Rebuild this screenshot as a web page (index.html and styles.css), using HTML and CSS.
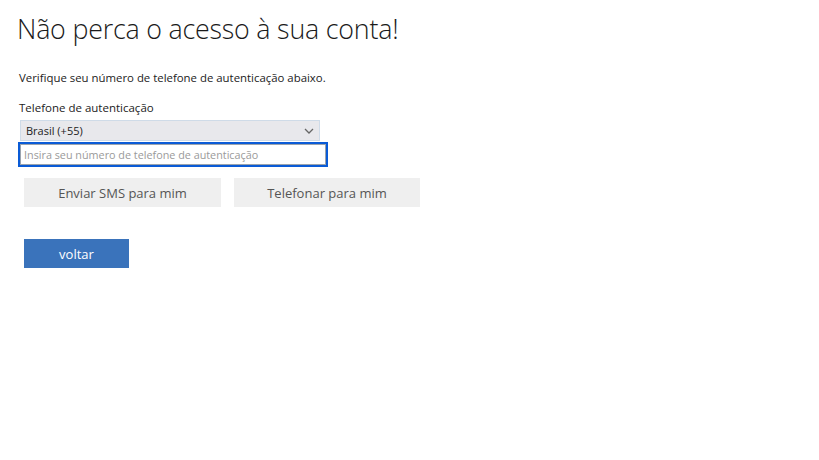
FILE: index.html
```html
<!DOCTYPE html>
<html lang="pt-BR">
<head>
<meta charset="utf-8">
<title>Não perca o acesso à sua conta!</title>
<link rel="stylesheet" href="styles.css">
</head>
<body>
<main class="page">
  <h1 class="title">Não perca o acesso à sua conta!</h1>
  <p class="intro">Verifique seu número de telefone de autenticação abaixo.</p>
  <label class="label">Telefone de autenticação</label>
  <div class="select">
    <span>Brasil (+55)</span>
    <svg class="chev" width="10" height="6" viewBox="0 0 10 6"><path d="M1 1 L5 5 L9 1" fill="none" stroke="#666" stroke-width="1.3"/></svg>
  </div>
  <div class="input"><span class="ph">Insira seu número de telefone de autenticação</span></div>
  <div class="actions">
    <button class="btn gray b1">Enviar SMS para mim</button>
    <button class="btn gray b2">Telefonar para mim</button>
  </div>
  <button class="btn primary">voltar</button>
</main>
</body>
</html>
```
FILE: styles.css
```css
html, body { margin: 0; padding: 0; background: #fff; }
body { font-family: "Open Sans", "Noto Sans", sans-serif; color: #222; }
.page { padding: 0 0 0 18px; display: flex; flex-direction: column; align-items: flex-start; }
.title { font-weight: 300; font-size: 26.8px; margin: 11px 0 0 -1px; line-height: 36px; color: #1a1a1a; letter-spacing: -0.2px; }
.intro { font-size: 11.4px; margin: 23px 0 0 1px; line-height: 16px; color: #222; }
.label { font-size: 11.5px; margin: 14px 0 0 1px; line-height: 16px; color: #222; }
.select { box-sizing: border-box; width: 300px; height: 21px; margin: 4px 0 0 2px; background: #e8e8ec; border: 1px solid #cfdbe8; display: flex; align-items: center; justify-content: space-between; padding: 0 5px 0 5px; font-size: 11px; color: #222; }
.chev { margin-right: 0; }
.input { box-sizing: border-box; width: 310px; height: 25px; margin: 1px 0 0 0; border: 2px solid #0a5bd6; box-shadow: inset 0 0 0 1px #9aa3ad; display: flex; align-items: center; padding-left: 4px; font-size: 10.8px; }
.ph { color: #9a9a9a; }
.actions { display: flex; gap: 13px; margin: 11px 0 0 6px; }
.btn { border: none; font-family: inherit; font-size: 13px; padding: 0; cursor: pointer; }
.gray { background: #efefef; color: #555; height: 29px; }
.b1 { width: 197px; }
.b2 { width: 186px; }
.primary { background: #3a73bb; color: #fff; width: 105px; height: 29px; margin: 32px 0 0 6px; }
```
